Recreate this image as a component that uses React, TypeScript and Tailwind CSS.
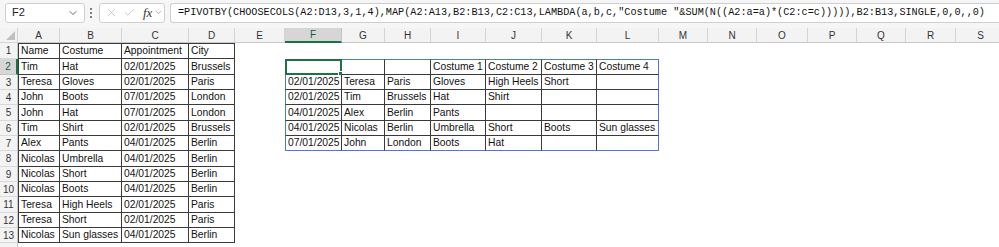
import { Check, ChevronDown, X } from 'lucide-react';

const cols = ['', 'A', 'B', 'C', 'D', 'E', 'F', 'G', 'H', 'I', 'J', 'K', 'L', 'M', 'N', 'O', 'P', 'Q', 'R', 'S'];

const rowHeights = ['h-[16px]', 'h-[16px]', 'h-[15px]', 'h-[15px]', 'h-[16px]', 'h-[15px]', 'h-[15px]', 'h-[16px]', 'h-[15px]', 'h-[15px]', 'h-[16px]', 'h-[15px]', 'h-[15px]', 'h-[15px]'];

const source = [
  ['Name', 'Costume', 'Appointment', 'City'],
  ['Tim', 'Hat', '02/01/2025', 'Brussels'],
  ['Teresa', 'Gloves', '02/01/2025', 'Paris'],
  ['John', 'Boots', '07/01/2025', 'London'],
  ['John', 'Hat', '07/01/2025', 'London'],
  ['Tim', 'Shirt', '02/01/2025', 'Brussels'],
  ['Alex', 'Pants', '04/01/2025', 'Berlin'],
  ['Nicolas', 'Umbrella', '04/01/2025', 'Berlin'],
  ['Nicolas', 'Short', '04/01/2025', 'Berlin'],
  ['Nicolas', 'Boots', '04/01/2025', 'Berlin'],
  ['Teresa', 'High Heels', '02/01/2025', 'Paris'],
  ['Teresa', 'Short', '02/01/2025', 'Paris'],
  ['Nicolas', 'Sun glasses', '04/01/2025', 'Berlin'],
];

// spill result of the PIVOTBY, F2:L7
const pivot = [
  ['', '', '', 'Costume 1', 'Costume 2', 'Costume 3', 'Costume 4'],
  ['02/01/2025', 'Teresa', 'Paris', 'Gloves', 'High Heels', 'Short', ''],
  ['02/01/2025', 'Tim', 'Brussels', 'Hat', 'Shirt', '', ''],
  ['04/01/2025', 'Alex', 'Berlin', 'Pants', '', '', ''],
  ['04/01/2025', 'Nicolas', 'Berlin', 'Umbrella', 'Short', 'Boots', 'Sun glasses'],
  ['07/01/2025', 'John', 'London', 'Boots', 'Hat', '', ''],
];

function cellInfo(r: number, c: number) {
  // r: 0-based sheet row index (0 = row 1), c: 1-based column (1 = A)
  if (c >= 1 && c <= 4 && r <= 12) {
    const cls = [
      'border-r border-b border-[#3a3a3a]',
      c === 1 ? 'border-l' : '',
      r === 0 ? 'border-t' : '',
    ].join(' ');
    return { text: source[r][c - 1], cls };
  }
  if (c >= 6 && c <= 12 && r >= 1 && r <= 6) {
    const pr = r - 1;
    const pc = c - 6;
    const cls = [
      'border-r border-b',
      c === 12 ? 'border-r-[#4a7bd0]' : 'border-r-[#3a3a3a]',
      r === 6 ? 'border-b-[#4a7bd0]' : 'border-b-[#3a3a3a]',
      c === 6 ? 'border-l border-l-[#4a7bd0]' : '',
      r === 1 ? 'border-t border-t-[#4a7bd0]' : '',
    ].join(' ');
    return { text: pivot[pr][pc], cls, selected: r === 1 && c === 6 };
  }
  return { text: '', cls: '' };
}

function FormulaBar() {
  return (
    <div className="flex items-center h-[28px] bg-[#f6f6f6] pb-[3px] pl-[5px]">
      <div className="flex items-center justify-between w-[80px] h-[20px] bg-white border border-[#cfcfcf] rounded-[3px] pl-[6px] pr-[5px] text-[11px] text-[#222]">
        <span>F2</span>
        <ChevronDown size={12} strokeWidth={1.6} className="text-[#444]" />
      </div>
      <div className="w-[6px] ml-[3px] mr-[5px] flex flex-col items-center gap-[2px]">
        <span className="w-[2px] h-[2px] rounded-full bg-[#555]" />
        <span className="w-[2px] h-[2px] rounded-full bg-[#555]" />
        <span className="w-[2px] h-[2px] rounded-full bg-[#555]" />
      </div>
      <div className="flex items-center gap-[5px] w-[66px] h-[20px] bg-white border border-[#cfcfcf] rounded-[3px] pl-[5px]">
        <X size={13} strokeWidth={1.2} className="text-[#b5b5b5]" />
        <Check size={13} strokeWidth={1.2} className="text-[#b5b5b5]" />
        <span className="font-['Liberation_Serif',serif] italic text-[13px] leading-none text-[#333] ml-[2px]">fx</span>
        <ChevronDown size={9} strokeWidth={1.6} className="text-[#777] -ml-[3px]" />
      </div>
      <div className="flex-1 ml-[5px] flex items-center h-[20px] bg-white border border-[#cfcfcf] rounded-l-[3px] border-r-0 pl-[7px] overflow-hidden whitespace-nowrap font-['Liberation_Mono',monospace] text-[10.2px] text-[#111]">
        =PIVOTBY(CHOOSECOLS(A2:D13,3,1,4),MAP(A2:A13,B2:B13,C2:C13,LAMBDA(a,b,c,"Costume "&SUM(N((A2:a=a)*(C2:c=c))))),B2:B13,SINGLE,0,0,,0)
      </div>
    </div>
  );
}

export default function App() {
  return (
    <div className="w-[999px] h-[247px] overflow-hidden bg-white font-['Liberation_Sans',Arial,sans-serif]">
      <FormulaBar />
      <div className="grid grid-cols-[18px_42px_62px_67px_46px_50px_57px_43px_46px_55px_56px_55px_62px_49px_49px_51px_49px_49px_50px_50px]">
        {/* column headers */}
        {cols.map((name, i) =>
          i === 0 ? (
            <div key="corner" className="h-[15px] bg-[#f3f3f3] border-r border-b border-[#d4d4d4] relative">
              <div className="absolute right-[2px] bottom-[2px] w-0 h-0 border-l-[9px] border-l-transparent border-b-[9px] border-b-[#c0c0c0]" />
            </div>
          ) : (
            <div
              key={name}
              className={
                name === 'F'
                  ? 'h-[15px] flex items-center justify-center bg-[#d6d6d6] border-r border-r-[#c4c4c4] border-b-2 border-b-[#1e7145] text-[10px] text-[#1e5c38]'
                  : 'h-[15px] flex items-center justify-center bg-[#f3f3f3] border-r border-r-[#d4d4d4] border-b border-b-[#c9c9c9] text-[10px] text-[#333]'
              }
            >
              {name}
            </div>
          ),
        )}
        {rowHeights.map((h, r) =>
          cols.map((_, c) => {
            if (c === 0) {
              return (
                <div
                  key={`${r}-h`}
                  className={
                    r === 1
                      ? `${h} flex items-center justify-center bg-[#d6d6d6] border-r-2 border-r-[#1e7145] border-b border-b-[#c4c4c4] text-[10px] text-[#1e5c38]`
                      : `${h} flex items-center justify-center bg-[#f3f3f3] border-r border-r-[#c9c9c9] border-b border-b-[#d9d9d9] text-[10px] text-[#333]`
                  }
                >
                  {r < 13 ? r + 1 : ''}
                </div>
              );
            }
            const info = cellInfo(r, c);
            return (
              <div
                key={`${r}-${c}`}
                className={`${h} ${info.cls} relative flex items-center pl-[2px] pt-[1px] text-[10.3px] leading-none text-[#111] whitespace-nowrap overflow-visible`}
              >
                {info.text}
                {info.selected && (
                  <div className="absolute -inset-[1px] border-2 border-[#1e7145]">
                    <div className="absolute -right-[3px] -bottom-[3px] w-[5px] h-[5px] bg-[#1e7145] border border-white" />
                  </div>
                )}
              </div>
            );
          }),
        )}
      </div>
    </div>
  );
}
